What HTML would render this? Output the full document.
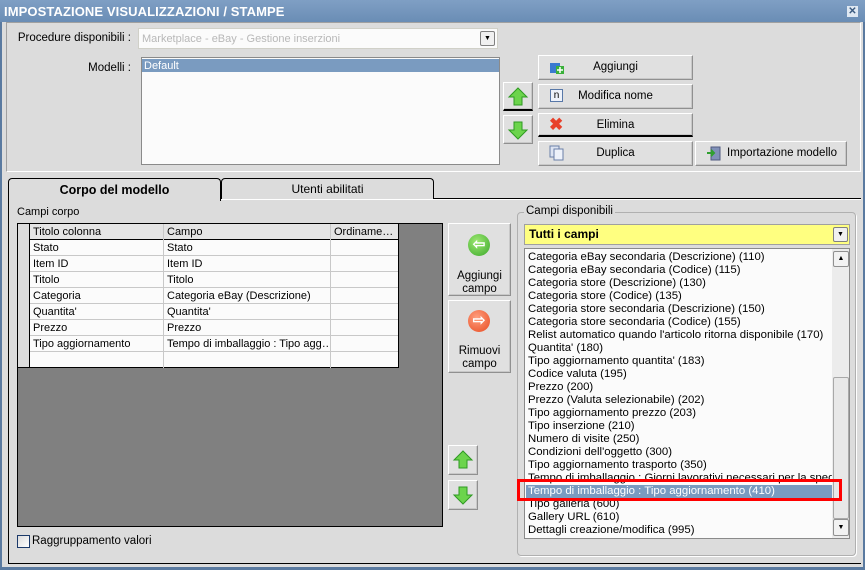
<!DOCTYPE html>
<html><head><meta charset="utf-8"><style>
*{box-sizing:border-box;margin:0;padding:0}
body{width:865px;height:570px;overflow:hidden;background:#5a7aa0;font-family:"Liberation Sans",sans-serif;font-size:11px;color:#000;position:relative}
.a{position:absolute}
.btn{position:absolute;background:#e0e0e0;border:1px solid;border-color:#fff #909090 #909090 #fff;box-shadow:inset -1px -1px 0 #c8c8c8;text-align:center;font-size:11.5px}
.lst{background:#fbfbfb;border:1px solid #8a8a8a}
.row{position:absolute;left:0;height:16px;border-bottom:1px solid #c8c8c8;width:368px}
.cell{position:absolute;top:0;height:16px;line-height:16px;padding-left:3px;border-right:1px solid #c8c8c8;white-space:nowrap;overflow:hidden;font-size:11px}
.it{position:absolute;left:3px;height:13px;line-height:13px;font-size:11.4px;white-space:nowrap}
</style></head><body>
<div class="a" style="left:0;top:0;width:865px;height:22px;background:linear-gradient(#7f9fc4,#6a8db5);"></div>
<div class="a" style="left:4px;top:4px;color:#fff;font-weight:bold;font-size:13px;letter-spacing:0.1px">IMPOSTAZIONE VISUALIZZAZIONI / STAMPE</div>
<div class="a" style="left:847px;top:6px;width:11px;height:11px;background:#dfe8f2;color:#3a5a80;font-size:10px;line-height:11px;text-align:center;font-weight:bold">✕</div>
<div class="a" style="left:2px;top:22px;width:861px;height:545px;background:#dcdcdc"></div>
<!-- top panel -->
<div class="a" style="left:6px;top:22px;width:855px;height:150px;border:1px solid;border-color:#a0a0a0 #fff #fff #a0a0a0"></div>
<div class="a" style="left:0;width:131px;text-align:right;top:32px;font-size:11.5px">Procedure disponibili :</div>
<div class="a" style="left:138px;top:28px;width:360px;height:21px;background:#fbfbfb;border:1px solid #d0d0c8;color:#b8b8b8;font-size:11px;padding:4px 3px">Marketplace - eBay - Gestione inserzioni</div>
<div class="a" style="left:480px;top:31px;width:15px;height:15px;border:1px solid #808080;border-radius:2px;background:#f0f0f0;font-size:7px;text-align:center;line-height:14px">▼</div>
<div class="a" style="left:0;width:131px;text-align:right;top:62px;font-size:11.5px">Modelli :</div>
<div class="a lst" style="left:141px;top:57px;width:359px;height:108px"></div>
<div class="a" style="left:142px;top:59px;width:357px;height:13px;background:#7a9bc0;color:#fff;font-size:11px;line-height:14px;padding-left:2px">Default</div>
<div class="btn" style="left:503px;top:82px;width:30px;height:29px;border-bottom:2px solid #000"><svg width="22" height="22" viewBox="0 0 22 22" style="margin-top:3px"><path d="M11 2 L20 11 L15 11 L15 19 L7 19 L7 11 L2 11Z" fill="#6cd44c" stroke="#2e9a22"/></svg></div>
<div class="btn" style="left:503px;top:115px;width:30px;height:29px"><svg width="22" height="22" viewBox="0 0 22 22" style="margin-top:3px"><path d="M11 20 L20 11 L15 11 L15 3 L7 3 L7 11 L2 11Z" fill="#6cd44c" stroke="#2e9a22"/></svg></div>
<div class="btn" style="left:538px;top:55px;width:155px;height:25px;line-height:23px">Aggiungi<svg class="a" style="left:10px;top:4px" width="16" height="14"><rect x="1" y="3" width="10" height="10" fill="#3a7ad0"/><rect x="7" y="6" width="8" height="8" fill="#3ab03a"/><path d="M11 7v6M8 10h6" stroke="#fff" stroke-width="1.5"/></svg></div>
<div class="btn" style="left:538px;top:84px;width:155px;height:25px;line-height:23px">Modifica nome<div class="a" style="left:11px;top:4px;width:13px;height:13px;border:1px solid #5878a8;background:#eef2fa;font-size:10px;line-height:11px">n</div></div>
<div class="btn" style="left:538px;top:113px;width:155px;height:24px;line-height:22px;border-bottom:2px solid #000">Elimina<div class="a" style="left:10px;top:1px;color:#e8402a;font-size:17px;font-weight:bold;line-height:20px">✖</div></div>
<div class="btn" style="left:538px;top:141px;width:155px;height:25px;line-height:23px">Duplica<svg class="a" style="left:10px;top:3px" width="15" height="16"><rect x="1" y="1" width="9" height="11" fill="#dde4f2" stroke="#6a7fa8"/><rect x="5" y="4" width="9" height="11" fill="#eef2fa" stroke="#6a7fa8"/></svg></div>
<div class="btn" style="left:695px;top:141px;width:152px;height:25px;line-height:23px;padding-left:22px">Importazione modello<svg class="a" style="left:10px;top:4px" width="16" height="15"><rect x="5" y="1" width="9" height="13" fill="#8090b8" stroke="#505a80"/><path d="M1 7h6M5 4l3 3-3 3" stroke="#30a030" stroke-width="2" fill="none"/></svg></div>
<!-- tabs -->
<div class="a" style="left:8px;top:199px;width:853px;height:365px;border:1px solid #000;border-top:1px solid #fff;border-right:none"></div>
<div class="a" style="left:8px;top:178px;width:213px;height:23px;background:#dcdcdc;border:1px solid #000;border-bottom:none;border-radius:4px 4px 0 0;text-align:center;font-weight:bold;font-size:12.5px;line-height:22px">Corpo del modello</div>
<div class="a" style="left:221px;top:178px;width:213px;height:21px;border:1px solid #000;border-bottom:none;border-radius:4px 4px 0 0;text-align:center;font-size:12px;line-height:20px">Utenti abilitati</div>
<div class="a" style="left:434px;top:198px;width:427px;height:1px;background:#000"></div>
<div class="a" style="left:17px;top:206px">Campi corpo</div>
<!-- grid -->
<div class="a" style="left:17px;top:223px;width:426px;height:304px;background:#808080;border:1px solid #000"></div>
<div class="a" style="left:18px;top:224px;width:381px;height:144px;background:#fbfbfb;border-right:1px solid #000;border-bottom:1px solid #000">
 <div class="a" style="left:0;top:0;width:12px;height:143px;background:#dcdcdc;border-right:1px solid #000"></div>
 <div class="a" style="left:12px;top:0">
  <div class="row" style="top:0;background:#e4e4e4;border-bottom:1px solid #000"><div class="cell" style="left:0;width:134px">Titolo colonna</div><div class="cell" style="left:134px;width:167px">Campo</div><div class="cell" style="left:301px;width:67px;border-right:none">Ordiname…</div></div>
  <div class="row" style="top:16px"><div class="cell" style="left:0;width:134px">Stato</div><div class="cell" style="left:134px;width:167px">Stato</div></div>
  <div class="row" style="top:32px"><div class="cell" style="left:0;width:134px">Item ID</div><div class="cell" style="left:134px;width:167px">Item ID</div></div>
  <div class="row" style="top:48px"><div class="cell" style="left:0;width:134px">Titolo</div><div class="cell" style="left:134px;width:167px">Titolo</div></div>
  <div class="row" style="top:64px"><div class="cell" style="left:0;width:134px">Categoria</div><div class="cell" style="left:134px;width:167px">Categoria eBay (Descrizione)</div></div>
  <div class="row" style="top:80px"><div class="cell" style="left:0;width:134px">Quantita'</div><div class="cell" style="left:134px;width:167px">Quantita'</div></div>
  <div class="row" style="top:96px"><div class="cell" style="left:0;width:134px">Prezzo</div><div class="cell" style="left:134px;width:167px">Prezzo</div></div>
  <div class="row" style="top:112px"><div class="cell" style="left:0;width:134px">Tipo aggiornamento</div><div class="cell" style="left:134px;width:167px">Tempo di imballaggio : Tipo agg…</div></div>
  <div class="row" style="top:128px;border-bottom:none"><div class="cell" style="left:0;width:134px"></div><div class="cell" style="left:134px;width:167px"></div></div>
 </div>
</div>
<div class="btn" style="left:448px;top:223px;width:63px;height:73px;font-size:11.5px;line-height:13px;padding-top:46px">Aggiungi<br>campo<div class="a" style="left:19px;top:10px;width:22px;height:22px;border-radius:50%;background:radial-gradient(circle at 40% 35%,#9ee872,#3aa82a);color:#fff;font-weight:bold;font-size:15px;line-height:21px">⇦</div></div>
<div class="btn" style="left:448px;top:300px;width:63px;height:73px;font-size:11.5px;line-height:13px;padding-top:44px">Rimuovi<br>campo<div class="a" style="left:19px;top:9px;width:22px;height:22px;border-radius:50%;background:radial-gradient(circle at 40% 35%,#ffa080,#e84a20);color:#fff;font-weight:bold;font-size:15px;line-height:21px">⇨</div></div>
<div class="btn" style="left:448px;top:445px;width:30px;height:30px"><svg width="22" height="22" viewBox="0 0 22 22" style="margin-top:3px"><path d="M11 2 L20 11 L15 11 L15 19 L7 19 L7 11 L2 11Z" fill="#6cd44c" stroke="#2e9a22"/></svg></div>
<div class="btn" style="left:448px;top:480px;width:30px;height:30px"><svg width="22" height="22" viewBox="0 0 22 22" style="margin-top:3px"><path d="M11 20 L20 11 L15 11 L15 3 L7 3 L7 11 L2 11Z" fill="#6cd44c" stroke="#2e9a22"/></svg></div>
<div class="a" style="left:17px;top:535px;width:13px;height:13px;border:1px solid #1c3a6a;background:linear-gradient(135deg,#dcdcdc,#fff)"></div>
<div class="a" style="left:32px;top:535px;font-size:11.5px">Raggruppamento valori</div>
<!-- campi disponibili -->
<div class="a" style="left:517px;top:212px;width:339px;height:344px;border:1px solid #b0b0b0;border-radius:4px;box-shadow:1px 1px 0 #fff"></div>
<div class="a" style="left:524px;top:205px;background:#dcdcdc;padding:0 2px;font-size:11.5px">Campi disponibili</div>
<div class="a" style="left:524px;top:224px;width:326px;height:21px;background:#ffff80;border:1px solid #a0a0a0;font-weight:bold;font-size:12px;line-height:19px;padding-left:4px">Tutti i campi</div>
<div class="a" style="left:833px;top:227px;width:15px;height:15px;border:1px solid #808080;border-radius:2px;background:#f0f0f0;font-size:7px;text-align:center;line-height:14px">▼</div>
<div class="a lst" style="left:524px;top:248px;width:326px;height:291px;overflow:hidden">
 <div class="it" style="top:2px">Categoria eBay secondaria (Descrizione) (110)</div>
 <div class="it" style="top:15px">Categoria eBay secondaria (Codice) (115)</div>
 <div class="it" style="top:28px">Categoria store (Descrizione) (130)</div>
 <div class="it" style="top:41px">Categoria store (Codice) (135)</div>
 <div class="it" style="top:54px">Categoria store secondaria (Descrizione) (150)</div>
 <div class="it" style="top:67px">Categoria store secondaria (Codice) (155)</div>
 <div class="it" style="top:80px">Relist automatico quando l'articolo ritorna disponibile (170)</div>
 <div class="it" style="top:93px">Quantita' (180)</div>
 <div class="it" style="top:106px">Tipo aggiornamento quantita' (183)</div>
 <div class="it" style="top:119px">Codice valuta (195)</div>
 <div class="it" style="top:132px">Prezzo (200)</div>
 <div class="it" style="top:145px">Prezzo (Valuta selezionabile) (202)</div>
 <div class="it" style="top:158px">Tipo aggiornamento prezzo (203)</div>
 <div class="it" style="top:171px">Tipo inserzione (210)</div>
 <div class="it" style="top:184px">Numero di visite (250)</div>
 <div class="it" style="top:197px">Condizioni dell'oggetto (300)</div>
 <div class="it" style="top:210px">Tipo aggiornamento trasporto (350)</div>
 <div class="it" style="top:223px">Tempo di imballaggio : Giorni lavorativi necessari per la spedizione</div>
 <div class="a" style="left:1px;top:236px;width:306px;height:13px;background:#7a9bc0"></div>
 <div class="it" style="top:236px;color:#fff">Tempo di imballaggio : Tipo aggiornamento (410)</div>
 <div class="it" style="top:249px">Tipo galleria (600)</div>
 <div class="it" style="top:262px">Gallery URL (610)</div>
 <div class="it" style="top:275px">Dettagli creazione/modifica (995)</div>
 <div class="a" style="left:307px;top:0;width:18px;height:291px;background:#ececec"></div>
 <div class="a" style="left:308px;top:2px;width:16px;height:16px;border:1px solid #909090;border-radius:2px;background:#f2f2f2;font-size:7px;text-align:center;line-height:14px">▲</div>
 <div class="a" style="left:308px;top:128px;width:16px;height:142px;border:1px solid #a8a8a8;border-radius:2px;background:#e8e8e8"></div>
 <div class="a" style="left:308px;top:270px;width:16px;height:17px;border:1px solid #909090;border-radius:2px;background:#f2f2f2;font-size:7px;text-align:center;line-height:15px">▼</div>
</div>
<div class="a" style="left:517px;top:479px;width:325px;height:22px;border:3px solid #f00"></div>
</body></html>
